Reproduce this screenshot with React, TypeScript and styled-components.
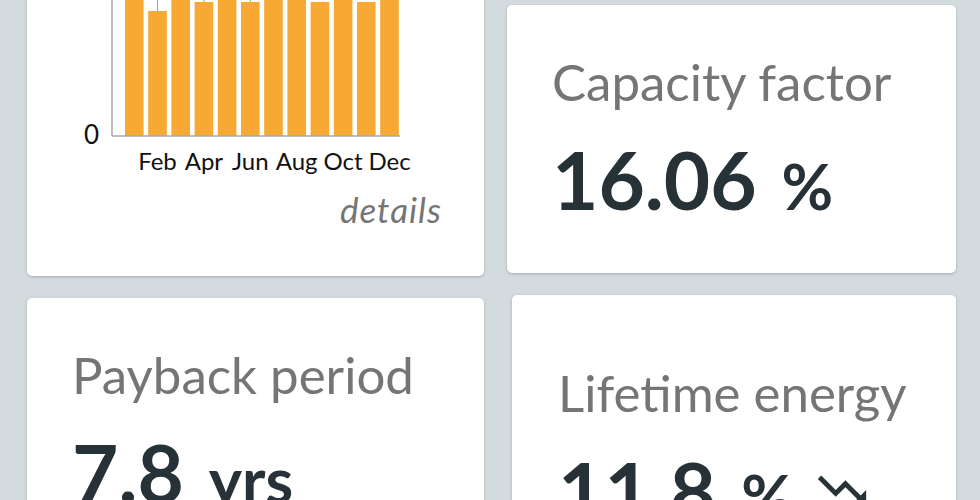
import React from 'react';
import styled, { createGlobalStyle } from 'styled-components';
import { MdTrendingDown } from 'react-icons/md';

const GlobalStyle = createGlobalStyle`
  html, body {
    margin: 0;
    padding: 0;
    background-color: #d3dbdf;
    overflow: hidden;
  }
`;

const Page = styled.main`
  display: flex;
  align-items: flex-start;
  gap: 23px;
  margin-top: -40px;
  padding: 0 24px 0 27px;
  font-family: 'Lato', 'Liberation Sans', sans-serif;
`;

const Column = styled.div<{ $width: number; $top?: number }>`
  display: flex;
  flex-direction: column;
  gap: 22px;
  width: ${(p) => p.$width}px;
  padding-top: ${(p) => p.$top ?? 0}px;
`;

const Card = styled.section<{ $pad?: string; $inset?: number }>`
  box-sizing: border-box;
  margin-left: ${(p) => p.$inset ?? 0}px;
  padding: ${(p) => p.$pad ?? '46px 0 54px 45px'};
  background-color: #ffffff;
  border-radius: 5px;
  box-shadow: 0 1px 3px rgba(0, 0, 0, 0.22);
`;

const ChartSvg = styled.svg`
  display: block;
`;

const DetailsRow = styled.div`
  display: flex;
  justify-content: flex-end;
  margin-top: 13px;
  padding-right: 42px;
`;

const DetailsLink = styled.a`
  color: #757575;
  font-size: 35px;
  font-style: italic;
  letter-spacing: 1px;
  line-height: 40px;
  text-decoration: none;
  cursor: pointer;
`;

const StatTitle = styled.h2`
  margin: 0;
  color: #757575;
  font-size: 51px;
  font-weight: 400;
  line-height: 62px;
  white-space: nowrap;
`;

const StatValue = styled.div`
  display: flex;
  align-items: baseline;
  margin-top: 26px;
  color: #263238;
  font-size: 80px;
  font-weight: 700;
  line-height: 80px;
  white-space: nowrap;
`;

const Unit = styled.span`
  margin-left: 25px;
  font-size: 63px;
  line-height: 63px;
`;

const Trend = styled.span`
  display: inline-flex;
  align-self: flex-start;
  margin: 11px 0 0 20px;
`;

const ORANGE = '#f7a934';
// bar tops in svg coords (card top = 0)
const barTops = [28, 51, 22, 42, 26, 42, 18, 24, 42, 30, 42, 20];
const whiskers = [1, 3, 5];
const months = ['Feb', 'Apr', 'Jun', 'Aug', 'Oct', 'Dec'];

const MonthlyChart = () => {
  const base = 176;
  const x0 = 98;
  const step = 23.2;
  const w = 18.6;
  return (
    <ChartSvg width={457} height={216} viewBox="0 0 457 216">
      {barTops.map((top, i) => (
        <rect key={i} x={x0 + i * step} y={top} width={w} height={base - top} fill={ORANGE} />
      ))}
      {whiskers.map((i) => (
        <line
          key={i}
          x1={x0 + i * step + w / 2}
          x2={x0 + i * step + w / 2}
          y1={20}
          y2={barTops[i]}
          stroke="#a0a0a0"
          strokeWidth={1}
        />
      ))}
      <line x1={85} x2={85} y1={10} y2={base} stroke="#a8a8a8" strokeWidth={1.5} />
      <line x1={85} x2={373} y1={base} y2={base} stroke="#a8a8a8" strokeWidth={1.5} />
      <text x={72} y={184} textAnchor="end" fontFamily="Lato, sans-serif" fontSize={26} fill="#111">
        0
      </text>
      {months.map((m, i) => (
        <text
          key={m}
          x={x0 + (i * 2 + 1) * step + w / 2}
          y={210}
          textAnchor="middle"
          fontFamily="Lato, sans-serif"
          fontSize={24}
          fill="#111"
        >
          {m}
        </text>
      ))}
    </ChartSvg>
  );
};

const App = () => {
  return (
    <>
      <GlobalStyle />
      <Page>
        <Column $width={457}>
          <Card $pad="0 0 47px 0">
            <MonthlyChart />
            <DetailsRow>
              <DetailsLink>details</DetailsLink>
            </DetailsRow>
          </Card>
          <Card>
            <StatTitle>Payback period</StatTitle>
            <StatValue>
              7.8<Unit>yrs</Unit>
            </StatValue>
          </Card>
        </Column>
        <Column $width={449} $top={45}>
          <Card>
            <StatTitle>Capacity factor</StatTitle>
            <StatValue>
              16.06<Unit>%</Unit>
            </StatValue>
          </Card>
          <Card $pad="67px 0 54px 46px" $inset={5}>
            <StatTitle>Lifetime energy</StatTitle>
            <StatValue>
              11.8<Unit>%</Unit>
              <Trend>
                <MdTrendingDown size={58} />
              </Trend>
            </StatValue>
          </Card>
        </Column>
      </Page>
    </>
  );
};

export default App;
